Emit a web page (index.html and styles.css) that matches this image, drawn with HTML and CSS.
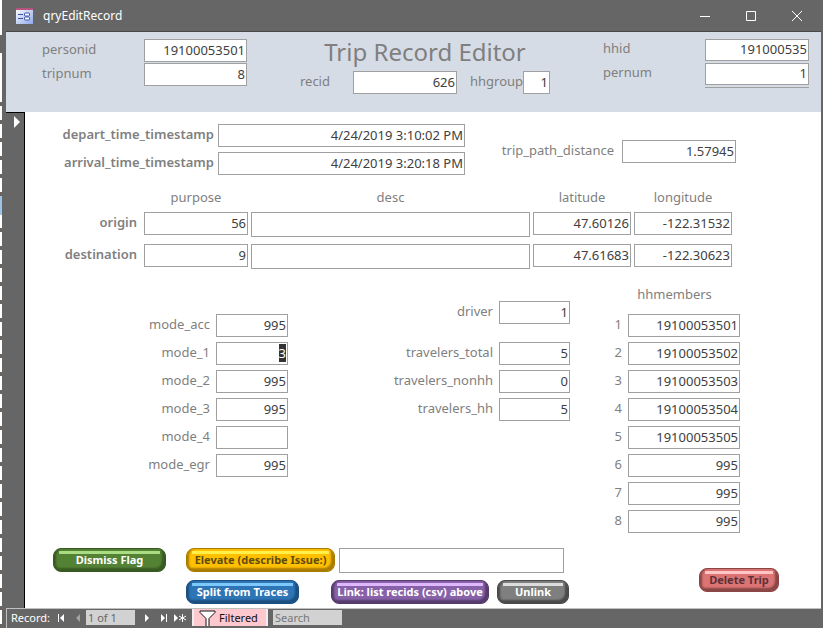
FILE: index.html
```html
<!DOCTYPE html>
<html lang="en">
<head>
<meta charset="utf-8">
<meta name="viewport" content="width=device-width, initial-scale=1">
<title>qryEditRecord</title>
<link rel="stylesheet" href="styles.css">
</head>
<body>
<div class="window">
  <header class="titlebar">
    <svg class="app-icon" width="17" height="16" viewBox="0 0 17 16" aria-hidden="true">
      <defs><linearGradient id="face" x1="0" y1="0" x2="1" y2="1"><stop offset="0" stop-color="#fff"/><stop offset="1" stop-color="#8ea8ea"/></linearGradient></defs>
      <rect width="17" height="16" fill="url(#face)"/>
      <rect width="17" height="2" fill="#b8527e"/>
      <path d="M2 6.500h5M2 10.500h5" stroke="#3b52a5"/>
      <rect x="8.500" y="5" width="5" height="3" rx="1" fill="#fff" stroke="#3b52a5"/>
      <rect x="8.500" y="9" width="5" height="3" rx="1" fill="#fff" stroke="#3b52a5"/>
    </svg>
    <h1 class="window-title">qryEditRecord</h1>
    <div class="window-controls">
      <button type="button" aria-label="Minimize"><svg width="12" height="12" viewBox="0 0 12 12"><path d="M1 6.500h10"/></svg></button>
      <button type="button" aria-label="Maximize"><svg width="12" height="12" viewBox="0 0 12 12"><path d="M1.500 1.500h9v9h-9z"/></svg></button>
      <button type="button" aria-label="Close"><svg width="12" height="12" viewBox="0 0 12 12"><path d="M1 1l10 10M11 1L1 11"/></svg></button>
    </div>
  </header>

  <section class="form-header">
    <div class="pair-grid">
      <label for="personid">personid</label><input id="personid" value="19100053501">
      <label for="tripnum">tripnum</label><input id="tripnum" value="8">
    </div>
    <div class="heading">
      <h2>Trip Record Editor</h2>
      <div class="heading-row">
        <label for="recid">recid</label><input id="recid" class="recid" value="626">
        <label for="hhgroup">hhgroup</label><input id="hhgroup" class="hhgroup" value="1">
      </div>
    </div>
    <div class="pair-grid household">
      <label for="hhid">hhid</label><input id="hhid" value="191000535">
      <label for="pernum">pernum</label><input id="pernum" value="1">
      <hr>
    </div>
  </section>

  <main class="record">
    <div class="selector"><svg width="6" height="12" viewBox="0 0 6 12" aria-hidden="true"><path d="M0 0l6 6-6 6z" fill="#fff"/></svg></div>
    <form class="detail">
      <div class="times">
        <div class="time-grid">
          <label for="depart">depart_time_timestamp</label><input id="depart" value="4/24/2019 3:10:02 PM">
          <label for="arrival">arrival_time_timestamp</label><input id="arrival" value="4/24/2019 3:20:18 PM">
        </div>
        <div class="distance">
          <label for="distance">trip_path_distance</label><input id="distance" value="1.57945">
        </div>
      </div>

      <div class="places">
        <span></span><span>purpose</span><span>desc</span><span>latitude</span><span>longitude</span>
        <label for="o-purpose">origin</label>
        <input id="o-purpose" value="56">
        <input class="desc" aria-label="origin desc">
        <input aria-label="origin latitude" value="47.60126">
        <input aria-label="origin longitude" value="-122.31532">
        <label for="d-purpose">destination</label>
        <input id="d-purpose" value="9">
        <input class="desc" aria-label="destination desc">
        <input aria-label="destination latitude" value="47.61683">
        <input aria-label="destination longitude" value="-122.30623">
      </div>

      <div class="groups">
        <div class="field-grid modes">
          <label for="mode-acc">mode_acc</label><input id="mode-acc" value="995">
          <label for="mode-1">mode_1</label><input id="mode-1" value="3">
          <label for="mode-2">mode_2</label><input id="mode-2" value="995">
          <label for="mode-3">mode_3</label><input id="mode-3" value="995">
          <label for="mode-4">mode_4</label><input id="mode-4">
          <label for="mode-egr">mode_egr</label><input id="mode-egr" value="995">
        </div>
        <div class="travelers">
          <div class="field-grid">
            <label for="driver">driver</label><input id="driver" value="1">
          </div>
          <div class="field-grid">
            <label for="t-total">travelers_total</label><input id="t-total" value="5">
            <label for="t-nonhh">travelers_nonhh</label><input id="t-nonhh" value="0">
            <label for="t-hh">travelers_hh</label><input id="t-hh" value="5">
          </div>
        </div>
        <div class="members">
          <h3>hhmembers</h3>
          <div class="field-grid">
            <label for="m1">1</label><input id="m1" value="19100053501">
            <label for="m2">2</label><input id="m2" value="19100053502">
            <label for="m3">3</label><input id="m3" value="19100053503">
            <label for="m4">4</label><input id="m4" value="19100053504">
            <label for="m5">5</label><input id="m5" value="19100053505">
            <label for="m6">6</label><input id="m6" value="995">
            <label for="m7">7</label><input id="m7" value="995">
            <label for="m8">8</label><input id="m8" value="995">
          </div>
        </div>
      </div>

      <div class="actions">
        <button type="button" class="btn green">Dismiss Flag</button>
        <div class="action-rows">
          <div class="action-row tight">
            <button type="button" class="btn yellow">Elevate (describe Issue:)</button>
            <input class="issue" aria-label="Issue description">
          </div>
          <div class="action-row">
            <button type="button" class="btn blue">Split from Traces</button>
            <button type="button" class="btn purple">Link: list recids (csv) above</button>
            <button type="button" class="btn gray">Unlink</button>
          </div>
        </div>
        <button type="button" class="btn red">Delete Trip</button>
      </div>
    </form>
  </main>

  <footer class="navbar">
    <label for="position">Record:</label>
    <button type="button" aria-label="First record"><svg width="8" height="8" viewBox="0 0 8 8"><path d="M0 0h1v8H0zM6 0v8L2 4z"/></svg></button>
    <button type="button" class="prev" aria-label="Previous record"><svg width="8" height="8" viewBox="0 0 8 8"><path d="M6 0v8L2 4z"/></svg></button>
    <input id="position" class="position" value="1 of 1">
    <button type="button" class="next" aria-label="Next record"><svg width="8" height="8" viewBox="0 0 8 8"><path d="M1 0v8l4-4z"/></svg></button>
    <button type="button" aria-label="Last record"><svg width="8" height="8" viewBox="0 0 8 8"><path d="M0 0v8l4-4zM5 0h1v8H5z"/></svg></button>
    <button type="button" class="new" aria-label="New record"><svg width="13" height="8" viewBox="0 0 13 8"><path d="M0 0v8l4-4z"/><path d="M8.500 0v8M5 2l7 4M12 2L5 6" fill="none" stroke="#fff"/></svg></button>
    <button type="button" class="filter"><svg width="17" height="16" viewBox="0 0 17 16"><path d="M1 1h15v1.500l-6 6V17H7V8.500l-6-6z" fill="#fff" stroke="#111"/></svg>Filtered</button>
    <input class="search" aria-label="Search" placeholder="Search">
  </footer>
</div>
<script src="script.js"></script>
</body>
</html>
```
FILE: styles.css
```css
* { box-sizing: border-box; }

/* The window behind shows as a sliver down the left side */
body {
  margin: 0;
  font-family: "Noto Sans", "Open Sans", sans-serif;
  font-size: 13px;
  line-height: 16px;
  color: #7f7f7f;
  background:
    linear-gradient(#666, #666) 0 35px / 2px 18px no-repeat,
    linear-gradient(#9dc3e6, #9dc3e6) 0 196px / 2px 19px no-repeat,
    linear-gradient(#fff, #fff) 0 0 / 2px 100px no-repeat,
    repeating-linear-gradient(#fff 0 12px, #6e625c 12px 16px, #fff 16px 18px);
}

.window {
  display: flex;
  flex-direction: column;
  min-height: 100vh;
  margin-left: 2px;
  padding: 0 2px 0 4px;
  background: #666;
}

h1, h2, h3 { margin: 0; font-weight: 400; }

button { font: inherit; border: 0; padding: 0; background: none; }

input {
  font: inherit;
  width: 100%;
  min-width: 0;
  height: 23px;
  margin: 0;
  padding: 0 1px 2px;
  border: 1px solid #a0a0a0;
  border-radius: 0;
  background: #fff;
  color: #404040;
  text-align: right;
  outline: 0;
}

input::selection { background: #333; color: #fff; }

label { padding-bottom: 3px; }

/* Title bar */
.titlebar {
  display: flex;
  align-items: center;
  height: 32px;
  padding: 0 18px 0 10px;
  border-bottom: 1px solid #484848;
  color: #fff;
}

.window-title { margin-left: 10px; font-size: 12px; }

.window-controls { display: flex; gap: 34px; margin-left: auto; }
.window-controls button { display: flex; }
.window-controls svg { fill: none; stroke: #fff; }

/* Form header */
.form-header {
  display: flex;
  justify-content: space-between;
  min-height: 80px;
  padding: 7px 12px 0 36px;
  background: #d6dce5;
}

.pair-grid {
  display: grid;
  grid-template-columns: 102px 103px;
  grid-auto-rows: 23px;
  align-items: center;
  row-gap: 1px;
}

.pair-grid label { padding-bottom: 4px; }
.household { grid-template-columns: 102px 104px; align-items: start; }
.household label { padding-top: 1px; }
.household input { height: 22px; }
.household hr {
  grid-column: 2;
  width: 100%;
  margin: 0;
  border: 0;
  border-top: 1px solid #a0a0a0;
}

.heading h2 { font-size: 24px; line-height: 26px; text-align: center; }
.heading-row { display: flex; align-items: center; margin-top: 6px; }
.heading-row label { padding-bottom: 4px; }
.heading-row .recid { width: 104px; margin: 0 13px 0 23px; }
.heading-row .hhgroup { width: 27px; }

/* Record area */
.record { display: flex; flex: 1; background: #fff; }

.selector {
  width: 19px;
  padding: 2px 0 0 8px;
  border-top: 1px solid #000;
  border-right: 1px solid #000;
  background: #666;
}

.detail { flex: 1; min-width: 0; }

.times { display: flex; justify-content: space-between; padding: 12px 85px 0 0; }

.time-grid {
  display: grid;
  grid-template-columns: 189px 247px;
  gap: 5px 4px;
  align-items: center;
}

.time-grid label, .places label { font-weight: 600; text-align: right; }
.time-grid label { padding-bottom: 4px; }

.distance { display: flex; align-items: center; gap: 8px; padding-top: 4px; }
.distance input { width: 114px; }

.places {
  display: grid;
  grid-template-columns: 116px 104px minmax(0, 1fr) 98px 98px;
  gap: 7px 3px;
  padding: 14px 89px 0 0;
}

.places span { text-align: center; }
.places label { padding: 2px 4px 0 0; }
.places .desc { height: 25px; }

.groups { display: flex; padding: 17px 81px 0 0; }

.field-grid {
  display: grid;
  grid-template-columns: 185px 72px;
  gap: 5px 6px;
  align-items: center;
  text-align: right;
}

.modes { margin-top: 28px; align-self: start; }

.travelers { margin-left: auto; padding-top: 15px; }
.travelers .field-grid { grid-template-columns: 110px 71px; }
.travelers .field-grid + .field-grid { margin-top: 18px; }

.members { margin-left: 37px; }
.members h3 { margin-bottom: 12px; padding-left: 2px; font-size: 13px; text-align: center; }
.members .field-grid { grid-template-columns: 15px 112px; }

/* Action buttons */
.actions { display: flex; align-items: flex-start; padding: 15px 42px 3px 28px; }
.action-rows { display: flex; flex-direction: column; gap: 7px; margin-left: 20px; }
.action-row { display: flex; gap: 8px; }
.action-row.tight { gap: 4px; }

.btn {
  height: 24px;
  padding-bottom: 1px;
  border: 1px solid var(--edge);
  border-radius: 8px;
  background: linear-gradient(var(--shine), var(--shine)) 50% 2px / calc(100% - 10px) 3px no-repeat var(--face);
  color: #fff;
  font-size: 11px;
  font-weight: 700;
  line-height: 16px;
  white-space: nowrap;
  box-shadow: inset -3px -3px 2px var(--edge), inset 3px 0 2px -1px var(--edge);
}

.green { width: 113px; --face: #548235; --edge: #385a22; --shine: #a9dc83; }
.yellow { width: 149px; --face: #ffc000; --edge: #a87c00; --shine: #fff04a; color: #5f4c10; }
.blue { width: 113px; margin-right: 24px; --face: #2e75b6; --edge: #1d4f80; --shine: #7cc8ff; }
.purple { width: 158px; --face: #8862a8; --edge: #543b6b; --shine: #e0b8ff; }
.gray { width: 72px; --face: #7f7f7f; --edge: #4a4a4a; --shine: #ddd; }
.red { width: 80px; margin: 20px 0 0 auto; --face: #dc7474; --edge: #8a4545; --shine: #ffc4c4; color: #603038; }

.issue { width: 225px; height: 25px; text-align: left; }

/* Record navigation */
.navbar {
  display: flex;
  align-items: center;
  height: 20px;
  padding: 0 0 2px 4px;
  border-top: 1px solid #c0c0c0;
  border-left: 1px solid #c0c0c0;
  color: #fff;
  font-size: 11px;
}

.navbar label { padding: 0; }
.navbar button { display: flex; align-items: center; }
.navbar svg { fill: #fff; }
.navbar label + button { margin-left: 8px; }
.navbar .prev { margin: 0 4px 0 8px; opacity: .4; }
.navbar input { height: 15px; padding: 0 2px; border: 0; background: #d2d2d2; color: #666; text-align: left; }
.navbar .position { width: 49px; }
.navbar .next { margin: 0 9px; }
.navbar .new { margin: 0 5px; }
.navbar .filter {
  align-self: stretch;
  gap: 3px;
  width: 76px;
  padding-left: 5px;
  border: 1px solid #eee;
  border-width: 0 2px;
  background: #ffc7ce;
  color: #111;
}
.navbar .search { width: 69px; margin-left: 5px; }
.navbar .search::placeholder { color: #777; opacity: 1; }
```
FILE: script.js
```js
const current = document.getElementById("mode-1");
current.focus();
current.select();
```
